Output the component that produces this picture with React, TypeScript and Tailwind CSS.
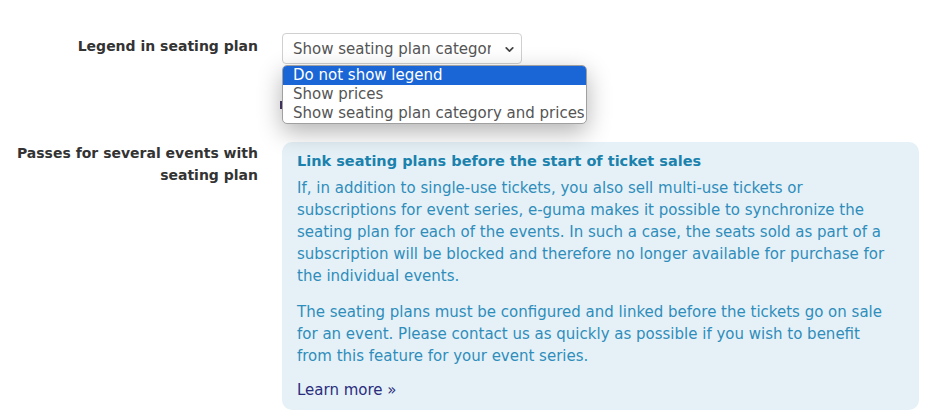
import {ChevronDown} from "lucide-react";

const options = ["Do not show legend", "Show prices", "Show seating plan category and prices"];

const LegendSelect = () => {
    return (
        <div className="relative ml-[24px] w-[240px] h-[31px]">
            <div className="flex items-center h-full border border-[#d0d0d0] rounded-[4px] bg-white pl-[10px] pr-[5px] pt-[1px] text-[15px] text-[#555]">
                <span className="flex-1 overflow-hidden whitespace-nowrap">Show seating plan category and prices</span>
                <ChevronDown size={13} strokeWidth={3.2} className="ml-[12px] text-[#444]" />
            </div>
            <div className="absolute left-0 top-[32px] w-[305px] bg-white border border-[#a0a0a0] rounded-[5px] overflow-hidden shadow-[0_8px_24px_rgba(0,0,0,0.3)] text-[15px] z-10">
                {options.map((o, i) => (
                    <div
                        key={o}
                        className={`h-[19px] leading-[19px] pl-[10px] whitespace-nowrap ${i === 0 ? 'bg-[#1a66d6] text-white' : 'text-[#555]'}`}
                    >
                        {o}
                    </div>
                ))}
            </div>
        </div>
    );
};

export default function App() {
    return (
        <div className="w-[926px] h-[418px] overflow-hidden bg-white pt-[33px] font-['DejaVu_Sans',sans-serif]">
            <div className="flex items-start">
                <div className="w-[258px] text-right pt-[3px] font-bold text-[14px] text-[#333]">Legend in seating plan</div>
                <LegendSelect />
            </div>

            {/* row hidden behind the open dropdown */}
            <div className="h-[78px] pl-[280px] pt-[37px]">
                <div className="w-[2px] h-[8px] bg-[#4a3a6a]" />
            </div>

            <div className="flex items-start">
                <div className="w-[258px] text-right font-bold text-[14px] leading-[22px] text-[#333]">
                    Passes for several events with<br />seating plan
                </div>
                <div className="ml-[24px] w-[637px] h-[268px] rounded-[10px] bg-[#e5f1f7] pl-[15px] pr-[31px] pt-[8px] text-[15px] leading-[22px] text-[#2f8dbb]">
                    <h3 className="font-bold text-[14.5px] text-[#1b82ad] whitespace-nowrap">Link seating plans before the start of ticket sales</h3>
                    <p className="mt-[5px]">
                        If, in addition to single-use tickets, you also sell multi-use tickets or subscriptions for event series, e-guma makes it possible to synchronize the seating plan for each of the events. In such a case, the seats sold as part of a subscription will be blocked and therefore no longer available for purchase for the individual events.
                    </p>
                    <p className="mt-[14px]">
                        The seating plans must be configured and linked before the tickets go on sale for an event. Please contact us as quickly as possible if you wish to benefit from this feature for your event series.
                    </p>
                    <p className="mt-[12px]">
                        <a className="text-[#2b2d7d]">Learn more »</a>
                    </p>
                </div>
            </div>
        </div>
    );
}
